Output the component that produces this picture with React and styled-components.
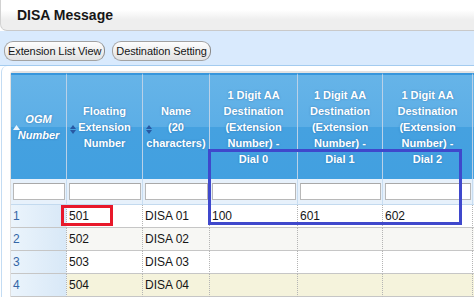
import styled, { createGlobalStyle } from "styled-components";

const GlobalStyle = createGlobalStyle`
  html, body {
    margin: 0;
    padding: 0;
    background: #fff;
  }
  body {
    font-family: "Liberation Sans", Arial, sans-serif;
    overflow: hidden;
  }
`;

const Page = styled.div`
  position: relative;
  width: 474px;
  height: 298px;
  overflow: hidden;
  background: #fff;
`;

const TitleBar = styled.div`
  height: 30px;
  border-left: 1px solid #d2d2d2;
  border-bottom: 1px solid #c9c9c9;
  border-bottom-left-radius: 7px;
  background: linear-gradient(#fff 0, #fff 10px, #eeeeee 20px, #eeeeee 100%);
  padding-left: 16px;
  display: flex;
  align-items: center;
`;

const Title = styled.h1`
  margin: 0;
  font-size: 14px;
  font-weight: bold;
  color: #161616;
`;

const Toolbar = styled.div`
  height: 35px;
  box-sizing: border-box;
  padding: 10px 4px 0;
  display: flex;
  gap: 7px;
  align-items: flex-start;
  background: #d9eafd;
  border-bottom: 1px solid #a3cbef;
`;

const Button = styled.button`
  height: 20px;
  padding: 0 3px;
  border: 1px solid #a2a2a2;
  border-right-color: #8a8a8a;
  border-radius: 9px;
  background: linear-gradient(#fdfdfd, #e2e2e2);
  font-family: inherit;
  font-size: 11px;
  letter-spacing: -0.1px;
  color: #151515;
  cursor: pointer;
`;

const Panel = styled.div`
  margin-left: 1px;
  border-left: 1px solid #c3dcf3;
  border-top-left-radius: 6px;
  padding: 5px 0 0 8px;
`;

const Frame = styled.div`
  border-top: 2px solid #e2e2e2;
  border-left: 1px solid #e0e0e0;
  border-top-left-radius: 4px;
`;

const Table = styled.table`
  border-spacing: 0;
  table-layout: fixed;
  width: 522px;
`;

const Th = styled.th`
  position: relative;
  height: 104px;
  padding: 0 2px;
  border-top: 2px solid #3796dc;
  border-right: 1px solid #b9d1e8;
  background: linear-gradient(#66b4e8 0%, #5caee6 50%, #45a1e0 50%, #42a0e0 100%);
  color: #fff;
  font-size: 11px;
  font-weight: bold;
  font-style: ${(p) => (p.$italic ? "italic" : "normal")};
  line-height: 16px;
  text-align: center;
  vertical-align: middle;
  text-shadow: 0 0 2px rgba(20, 80, 140, 0.55);
`;

const SortMark = styled.span`
  position: absolute;
  left: ${(p) => p.$left}px;
  top: 50px;
  display: flex;
`;

const FilterCell = styled.td`
  height: 25px;
  padding: 0 1px 0 2px;
  background: #e7f1fb;
  border-right: 1px solid #c8ddf1;
  border-bottom: 1px solid #c3daef;
`;

const FilterInput = styled.input`
  display: block;
  width: 100%;
  height: 17px;
  box-sizing: border-box;
  border: 1px solid #b8b8b8;
  border-top-color: #a9a9a9;
  background: #fff;
`;

const Td = styled.td`
  height: 22px;
  padding: 0 2px;
  border-right: 1px dotted #b4b4b4;
  border-bottom: 1px solid #c6c6c6;
  background: ${(p) => p.$bg};
  color: #161616;
  font-size: 12px;
  white-space: nowrap;
  overflow: hidden;
`;

const IndexTd = styled(Td)`
  color: #3466a6;
  background: linear-gradient(to right, #ebf4fc, #d8e8f7);
`;

const Mark = styled.div`
  position: absolute;
  box-sizing: border-box;
  border: 3px solid ${(p) => p.$color};
  pointer-events: none;
`;

const columns = [56, 76, 67, 88, 85, 90, 60];

const rows = [
  { n: 1, ext: "501", name: "DISA 01", d0: "100", d1: "601", d2: "602", bg: "#fff" },
  { n: 2, ext: "502", name: "DISA 02", d0: "", d1: "", d2: "", bg: "#f7f7f4" },
  { n: 3, ext: "503", name: "DISA 03", d0: "", d1: "", d2: "", bg: "#fff" },
  { n: 4, ext: "504", name: "DISA 04", d0: "", d1: "", d2: "", bg: "#f5f3dc" },
];

function UpArrow() {
  return (
    <svg width="7" height="5" viewBox="0 0 7 5">
      <path d="M0 5 L3.5 0 L7 5 Z" fill="#eef6fd" />
    </svg>
  );
}

function UpDown() {
  return (
    <svg width="6" height="9" viewBox="0 0 6 9">
      <path d="M0 4 L3 0 L6 4 Z M0 5 L3 9 L6 5 Z" fill="#2859a3" />
    </svg>
  );
}

function DialHead({ dial }) {
  return (
    <Th>
      1 Digit AA
      <br />
      Destination
      <br />
      (Extension
      <br />
      Number) -
      <br />
      Dial {dial}
    </Th>
  );
}

export default function App() {
  return (
    <Page>
      <GlobalStyle />
      <TitleBar>
        <Title>DISA Message</Title>
      </TitleBar>
      <Toolbar>
        <Button>Extension List View</Button>
        <Button>Destination Setting</Button>
      </Toolbar>
      <Panel>
        <Frame>
          <Table>
            <colgroup>
              {columns.map((w, i) => (
                <col key={i} style={{ width: w }} />
              ))}
            </colgroup>
            <thead>
              <tr>
                <Th $italic>
                  <SortMark $left={2}>
                    <UpArrow />
                  </SortMark>
                  OGM
                  <br />
                  Number
                </Th>
                <Th>
                  <SortMark $left={3}>
                    <UpDown />
                  </SortMark>
                  Floating
                  <br />
                  Extension
                  <br />
                  Number
                </Th>
                <Th>
                  <SortMark $left={3}>
                    <UpDown />
                  </SortMark>
                  Name
                  <br />
                  (20
                  <br />
                  characters)
                </Th>
                <DialHead dial={0} />
                <DialHead dial={1} />
                <DialHead dial={2} />
                <Th />
              </tr>
              <tr>
                {columns.map((w, i) => (
                  <FilterCell key={i}>
                    <FilterInput type="text" />
                  </FilterCell>
                ))}
              </tr>
            </thead>
            <tbody>
              {rows.map((r) => (
                <tr key={r.n}>
                  <IndexTd>{r.n}</IndexTd>
                  <Td $bg={r.bg}>{r.ext}</Td>
                  <Td $bg={r.bg}>{r.name}</Td>
                  <Td $bg={r.bg}>{r.d0}</Td>
                  <Td $bg={r.bg}>{r.d1}</Td>
                  <Td $bg={r.bg}>{r.d2}</Td>
                  <Td $bg={r.bg} />
                </tr>
              ))}
            </tbody>
          </Table>
        </Frame>
      </Panel>
      <Mark $color="#e8182a" style={{ left: 61, top: 205, width: 52, height: 21 }} />
      <Mark $color="#3f48cc" style={{ left: 208, top: 149, width: 254, height: 76 }} />
    </Page>
  );
}
